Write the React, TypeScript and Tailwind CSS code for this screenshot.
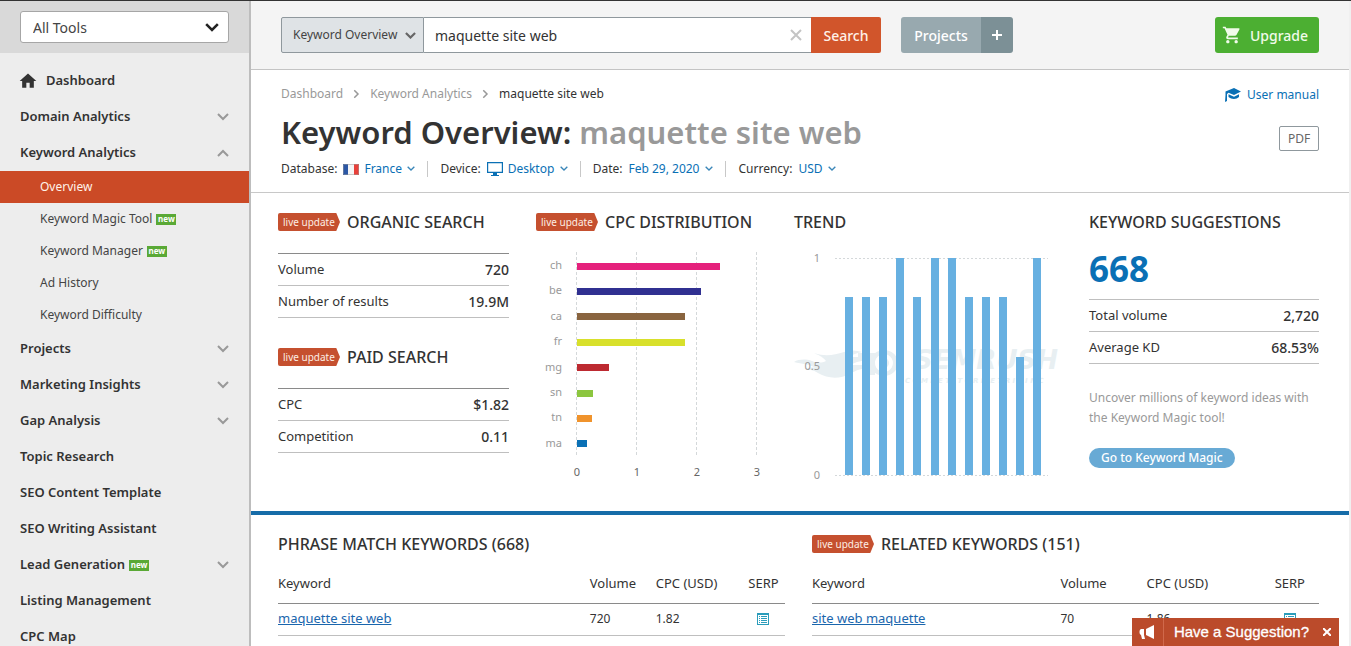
import { useState } from 'react'
import { MdHome, MdShoppingCart } from 'react-icons/md'

type NavItem = {
    label: string
    icon?: boolean
    isNew?: boolean
    expandable?: boolean
    children?: { label: string; isNew?: boolean; active?: boolean }[]
}

const navItems: NavItem[] = [
    { label: 'Dashboard', icon: true },
    { label: 'Domain Analytics', expandable: true },
    {
        label: 'Keyword Analytics',
        expandable: true,
        children: [
            { label: 'Overview', active: true },
            { label: 'Keyword Magic Tool', isNew: true },
            { label: 'Keyword Manager', isNew: true },
            { label: 'Ad History' },
            { label: 'Keyword Difficulty' },
        ],
    },
    { label: 'Projects', expandable: true },
    { label: 'Marketing Insights', expandable: true },
    { label: 'Gap Analysis', expandable: true },
    { label: 'Topic Research' },
    { label: 'SEO Content Template' },
    { label: 'SEO Writing Assistant' },
    { label: 'Lead Generation', expandable: true, isNew: true },
    { label: 'Listing Management' },
    { label: 'CPC Map' },
]

const cpcData = [
    { country: 'ch', value: 2.39, color: '#e5217c' },
    { country: 'be', value: 2.07, color: '#303091' },
    { country: 'ca', value: 1.8, color: '#89643f' },
    { country: 'fr', value: 1.8, color: '#d8e02b' },
    { country: 'mg', value: 0.54, color: '#bd2a31' },
    { country: 'sn', value: 0.27, color: '#8cc63f' },
    { country: 'tn', value: 0.25, color: '#f0932c' },
    { country: 'ma', value: 0.17, color: '#0a70b5' },
]

const trendData = [0.82, 0.82, 0.82, 1, 0.82, 1, 1, 0.82, 0.82, 0.82, 0.545, 1]

const Chevron = ({ className, up, stroke = 2 }: { className?: string; up?: boolean; stroke?: number }) => (
    <svg viewBox="0 0 12 8" className={className} fill="none" stroke="currentColor" strokeWidth={stroke} aria-hidden="true">
        <path d={up ? 'M1 7l5-5 5 5' : 'M1 1l5 5 5-5'} />
    </svg>
)

const NewBadge = () => (
    <span className="flex h-[11px] w-5 items-center justify-center bg-[#5aa936] text-[8px] leading-none font-bold text-white">new</span>
)

const LiveUpdate = () => (
    <span className="flex h-[18px] w-[62px] items-center rounded-l-xs bg-[#c5502f] pl-[5px] text-[10px] font-normal text-[#fdeee4] [clip-path:polygon(0_0,94%_0,100%_50%,94%_100%,0_100%)]">
        live update
    </span>
)

const SectionTitle = ({ children, live }: { children: string; live?: boolean }) => (
    <h2 className="flex h-6 items-center gap-[7px] text-[16px] font-medium whitespace-nowrap text-[#333]">
        {live && <LiveUpdate />}
        {children}
    </h2>
)

const Sidebar = () => {
    const [open, setOpen] = useState<Record<string, boolean>>({ 'Keyword Analytics': true })

    return (
        <aside className="w-[251px] shrink-0 border-r-2 border-[#bdbdbd] bg-[#ededed]">
            <div className="relative bg-[#d9d9d9] px-5 pt-[10px] pb-[10px]">
                <select aria-label="Tools" className="h-8 w-full max-w-[209px] appearance-none rounded-[3px] border border-[#a6a6a6] bg-white px-3 text-[14px] text-[#444]">
                    <option>All Tools</option>
                </select>
                <Chevron className="pointer-events-none absolute top-[22px] right-[30px] w-[14px] text-[#222]" stroke={2.2} />
            </div>
            <nav className="pt-[10px]">
                <ul>
                    {navItems.map((item) => (
                        <li key={item.label}>
                            {item.expandable ? (
                                <button
                                    type="button"
                                    aria-expanded={!!open[item.label]}
                                    onClick={() => setOpen({ ...open, [item.label]: !open[item.label] })}
                                    className="flex h-9 w-full items-center gap-1 px-5 text-[13px] font-semibold text-[#333]"
                                >
                                    {item.label}
                                    {item.isNew && <NewBadge />}
                                    <Chevron className="ml-auto w-3 text-[#999]" up={open[item.label]} />
                                </button>
                            ) : (
                                <a href="#" className="flex h-9 items-center px-5 text-[13px] font-semibold text-[#333]">
                                    {item.icon && <MdHome className="mr-2 -ml-[2px] h-5 w-5" />}
                                    {item.label}
                                </a>
                            )}
                            {item.children && open[item.label] && (
                                <ul>
                                    {item.children.map((child) => (
                                        <li key={child.label}>
                                            <a
                                                href="#"
                                                className={
                                                    child.active
                                                        ? 'flex h-8 items-center bg-[#cb4a26] pl-10 text-[12px] text-[#fff3ea]'
                                                        : 'flex h-8 items-center gap-1 pl-10 text-[12px] text-[#444]'
                                                }
                                            >
                                                {child.label}
                                                {child.isNew && <NewBadge />}
                                            </a>
                                        </li>
                                    ))}
                                </ul>
                            )}
                        </li>
                    ))}
                </ul>
            </nav>
        </aside>
    )
}

const Header = () => (
    <header className="flex items-center border-b border-[#c4c4c4] bg-[#f4f4f4] px-[30px] py-4">
        <form className="flex h-9 min-w-0 max-w-[600px] flex-1" onSubmit={(e) => e.preventDefault()}>
            <div className="relative">
                <select aria-label="Report" className="h-9 w-[143px] appearance-none rounded-l-xs border border-[#8f989d] bg-[#dfe3e6] pl-[11px] text-[12px] text-[#444]">
                    <option>Keyword Overview</option>
                </select>
                <Chevron className="pointer-events-none absolute top-[15px] right-2 w-[11px] text-[#666]" stroke={2.4} />
            </div>
            <div className="relative flex-1">
                <input
                    aria-label="Keyword"
                    defaultValue="maquette site web"
                    className="h-9 w-full border-y border-[#8f989d] bg-white pr-9 pl-[11px] text-[14px] text-[#333] outline-none"
                />
                <button type="button" aria-label="Clear" className="absolute top-3 right-[9px]">
                    <svg viewBox="0 0 12 12" className="w-3" stroke="#c4c4c4" strokeWidth="2" aria-hidden="true">
                        <path d="M1 1l10 10M11 1L1 11" />
                    </svg>
                </button>
            </div>
            <button type="submit" className="h-9 w-[70px] rounded-r-xs bg-[#d1552b] text-[14px] font-medium text-[#fff1e8]">
                Search
            </button>
        </form>
        <div className="ml-5 flex h-9 overflow-hidden rounded-[3px] text-white">
            <button type="button" className="w-20 bg-[#98a9af] text-[14px] font-medium">Projects</button>
            <button type="button" aria-label="Add project" className="flex w-8 items-center justify-center bg-[#7c9096]">
                <svg viewBox="0 0 10 10" className="w-[10px]" stroke="currentColor" strokeWidth="2" aria-hidden="true">
                    <path d="M5 0v10M0 5h10" />
                </svg>
            </button>
        </div>
        <button type="button" className="ml-auto flex h-9 w-[104px] items-center gap-2 rounded-[3px] bg-[#4caf32] pl-[7px] text-[14px] font-medium text-[#f1fbea]">
            <MdShoppingCart className="h-5 w-5" />
            Upgrade
        </button>
    </header>
)

const FranceFlag = () => (
    <svg viewBox="0 0 16 11" className="w-4" aria-hidden="true">
        <path fill="#2b57a5" d="M0 0h5v11H0z" />
        <path fill="#f4f4f4" d="M5 0h6v11H5z" />
        <path fill="#e8403a" d="M11 0h5v11h-5z" />
        <path fill="none" stroke="#999" strokeOpacity="0.5" d="M.5 .5h15v10H.5z" />
    </svg>
)

const Monitor = () => (
    <svg viewBox="0 0 16 14" className="w-4" aria-hidden="true" fill="#0a70b5">
        <path fillRule="evenodd" d="M0 0h16v11H0zM1.2 1.2v8.6h13.6V1.2z" />
        <path d="M6 11h4v2h2v1H4v-1h2z" />
    </svg>
)

const GradCap = () => (
    <svg viewBox="0 0 16 14" className="w-4" aria-hidden="true" fill="#0a70b5">
        <path d="M9 0l7 3.500-7 3.500-5.500-2.200L2 6v7L0 14l.5-7V3.500z" />
        <path d="M3.500 6.300L9 8.700l5-2.500V9c-2.500 2.600-7.500 2.700-10.500 0z" />
    </svg>
)

const params = [
    { id: 'database', label: 'Database:', value: 'France', icon: <FranceFlag /> },
    { id: 'device', label: 'Device:', value: 'Desktop', icon: <Monitor /> },
    { id: 'date', label: 'Date:', value: 'Feb 29, 2020' },
    { id: 'currency', label: 'Currency:', value: 'USD' },
]

const PageTitle = () => (
    <section className="flex justify-between border-b border-[#c8c8c8] px-[30px] pt-[14px] pb-[13px]">
        <div>
            <nav aria-label="Breadcrumb" className="flex h-5 items-center gap-[9px] text-[12px] text-[#999]">
                <a href="#">Dashboard</a>
                <Chevron className="w-[9px] -rotate-90" />
                <a href="#">Keyword Analytics</a>
                <Chevron className="w-[9px] -rotate-90" />
                <span className="text-[#333]">maquette site web</span>
            </nav>
            <h1 className="mt-[7px] text-[31px] leading-[42px] font-semibold text-[#333]">
                Keyword Overview: <span className="text-[#999]">maquette site web</span>
            </h1>
            <div className="mt-[6px] flex h-5 items-center text-[12px]">
                {params.map((param) => (
                    <div key={param.id} className="flex h-4 items-center gap-[5px] border-l border-[#c8c8c8] px-3 first:border-l-0 first:pl-0">
                        <label htmlFor={param.id} className="mr-px text-[#333]">{param.label}</label>
                        {param.icon}
                        <div className="relative flex items-center">
                            <select id={param.id} className="appearance-none pr-[13px] text-[#0a70b5]">
                                <option>{param.value}</option>
                            </select>
                            <Chevron className="pointer-events-none absolute right-0 w-2 text-[#3a86b8]" />
                        </div>
                    </div>
                ))}
            </div>
        </div>
        <div className="flex flex-col items-end gap-5">
            <a href="#" className="flex h-[22px] items-center gap-[6px] text-[12px] text-[#0a70b5]">
                <GradCap />
                User manual
            </a>
            <button type="button" className="h-[25px] w-10 rounded-xs border border-[#8f989d] text-[12px] text-[#666]">PDF</button>
        </div>
    </section>
)

const Stats = ({ rows, light }: { rows: [string, string][]; light?: boolean }) => (
    <table className={light ? 'w-full border-t border-[#bfbfbf] text-[#333]' : 'w-full border-t border-[#8a8a8a] text-[#333]'}>
        <tbody>
            {rows.map(([name, value]) => (
                <tr key={name} className="h-8 border-b border-[#bfbfbf]">
                    <th scope="row" className="text-left text-[13px] font-normal">{name}</th>
                    <td className="text-right text-[14px] font-medium">{value}</td>
                </tr>
            ))}
        </tbody>
    </table>
)

const CpcChart = () => (
    <svg viewBox="0 0 231 234" className="mt-[14px] w-[231px]" role="img" aria-label="CPC distribution by country">
        {[0, 1, 2, 3].map((tick) => (
            <g key={tick}>
                <path d={`M${40.5 + tick * 60} 4v204`} stroke="#d4d8da" strokeDasharray="3 2" />
                <text x={41 + tick * 60} y="228" textAnchor="middle" fontSize="11" fill="#666">{tick}</text>
            </g>
        ))}
        {cpcData.map((row, i) => (
            <g key={row.country}>
                <text x="26" y={21 + i * 25.4} textAnchor="end" fontSize="11" fill="#999">{row.country}</text>
                <rect x="41" y={Math.round(14.5 + i * 25.4)} width={Math.round(row.value * 60)} height="7" fill={row.color} />
            </g>
        ))}
    </svg>
)

const TrendChart = () => (
    <svg viewBox="0 0 268 234" className="mt-[14px] w-[268px]" role="img" aria-label="Search volume trend">
        <g fill="#e8eff2">
            <path d="M0 114c5-3 12-3 18-1 5 2 10 2 14 0-4-5-8-6-12-8 12 4 20 2 30-1 6-2 12-2 18 0-6 1-10 3-14 5h24v3c-10 0-16 2-22 5h24v3c-12 0-18 2-24 6-10 5-22 5-32-1-5-3-9-4-14-4 4-1 8-2 12-1-7-4-14-4-22-6z" />
            <path d="M64 105h17v22h-9v-16h-8z" />
            <path fillRule="evenodd" d="M90 102a14 13 0 1 0 .1 0zm0 4a9 9 0 1 1-.1 0z" />
            <circle cx="90" cy="115" r="5" />
            <text x="120" y="121" fontSize="26" fontWeight="700" fontStyle="italic" fontFamily="DejaVu Sans, sans-serif">SEMRUSH</text>
            <text x="111" y="135" fontSize="7" fontWeight="700" fontStyle="italic" fontFamily="DejaVu Sans, sans-serif">C O M P E T I T O R  M E T R I C  I N C</text>
        </g>
        <path d="M41 10.5h213M41 227.5h213" stroke="#d4d8da" strokeDasharray="2 2" />
        {trendData.map((value, i) => (
            <rect key={i} x={Math.round(51 + i * 17.1)} y={Math.round(227 - value * 217)} width="8" height={Math.round(value * 217)} fill="#67b0e1" />
        ))}
        <g fontSize="11" fill="#999" textAnchor="end">
            <text x="26" y="14">1</text>
            <text x="26" y="122">0.5</text>
            <text x="26" y="231">0</text>
        </g>
    </svg>
)

const Overview = () => (
    <section className="grid grid-cols-[231fr_231fr_268fr_230fr] gap-[27px] border-b-4 border-[#166ca8] pt-[17px] pr-[30px] pb-[29px] pl-[27px]">
        <div>
            <SectionTitle live>ORGANIC SEARCH</SectionTitle>
            <div className="mt-[19px] mb-[27px]">
                <Stats rows={[['Volume', '720'], ['Number of results', '19.9M']]} />
            </div>
            <SectionTitle live>PAID SEARCH</SectionTitle>
            <div className="mt-[19px]">
                <Stats rows={[['CPC', '$1.82'], ['Competition', '0.11']]} />
            </div>
        </div>
        <div>
            <SectionTitle live>CPC DISTRIBUTION</SectionTitle>
            <CpcChart />
        </div>
        <div>
            <SectionTitle>TREND</SectionTitle>
            <TrendChart />
        </div>
        <div>
            <SectionTitle>KEYWORD SUGGESTIONS</SectionTitle>
            <p className="mt-[15px] mb-[10px] text-[35px] leading-10 font-bold text-[#0a70b5]">668</p>
            <Stats light rows={[['Total volume', '2,720'], ['Average KD', '68.53%']]} />
            <p className="mt-6 text-[12px] leading-5 text-[#999]">
                Uncover millions of keyword ideas with the Keyword Magic tool!
            </p>
            <a href="#" className="mt-5 inline-flex h-5 items-center rounded-full bg-[#68aad5] px-3 text-[12px] font-medium text-white">
                Go to Keyword Magic
            </a>
        </div>
    </section>
)

const SerpIcon = () => (
    <svg viewBox="0 0 12 12" className="mx-auto w-3" aria-hidden="true">
        <path fill="#2b9dbb" fillRule="evenodd" d="M0 0h12v12H0zM1 2v9h10V2z" />
        <path stroke="#2b9dbb" d="M2 3.5h1M4 3.5h6M2 5.5h1M4 5.5h6M2 7.5h1M4 7.5h6M2 9.5h1M4 9.5h6" />
    </svg>
)

type KeywordTableProps = { title: string; live?: boolean; widths: string[]; row: [string, string, string] }

const KeywordTable = ({ title, live, widths, row }: KeywordTableProps) => (
    <div>
        <SectionTitle live={live}>{title}</SectionTitle>
        <table className="mt-[9px] w-full table-fixed text-left text-[#333]">
            <thead>
                <tr className="h-[38px] border-b border-[#8a8a8a] text-[13px]">
                    <th scope="col" className={`${widths[0]} font-normal`}>Keyword</th>
                    <th scope="col" className={`${widths[1]} font-normal`}>Volume</th>
                    <th scope="col" className={`${widths[2]} font-normal`}>CPC (USD)</th>
                    <th scope="col" className={`${widths[3]} text-center font-normal`}>SERP</th>
                </tr>
            </thead>
            <tbody>
                <tr className="h-8 border-b border-[#bfbfbf] text-[12px]">
                    <td>
                        <a href="#" className="text-[13px] text-[#1a66ad] underline">{row[0]}</a>
                    </td>
                    <td>{row[1]}</td>
                    <td>{row[2]}</td>
                    <td>
                        <a href="#" aria-label="View SERP" className="block">
                            <SerpIcon />
                        </a>
                    </td>
                </tr>
            </tbody>
        </table>
    </div>
)

const Suggestion = () => (
    <div className="fixed right-3 bottom-0 flex h-7 items-center bg-[#bb4b2b] text-white">
        <span className="flex h-full w-8 items-center justify-center border-r border-[#d0694b]">
            <svg viewBox="0 0 16 14" className="w-4" fill="currentColor" aria-hidden="true">
                <path d="M15 0v14l-8-4V4zM5 4v6l1 4H3L2 10C0 9.500 0 4.500 2 4z" />
            </svg>
        </span>
        <button type="button" className="pl-[10px] font-['Liberation_Sans',sans-serif] text-[15px] [-webkit-text-stroke:0.3px_white]">
            Have a Suggestion?
        </button>
        <button type="button" aria-label="Close" className="pr-2 pl-[14px]">
            <svg viewBox="0 0 8 8" className="w-2" stroke="currentColor" strokeWidth="2" aria-hidden="true">
                <path d="M0 0l8 8M8 0L0 8" />
            </svg>
        </button>
    </div>
)

const App = () => {
    return (
        <div className="flex h-screen overflow-hidden border-t border-[#333] bg-white font-['Noto_Sans',sans-serif]">
            <Sidebar />
            <main className="min-w-0 flex-1 border-r-2 border-[#f0f0f0]">
                <Header />
                <PageTitle />
                <Overview />
                <section className="grid grid-cols-2 gap-[27px] pt-[17px] pr-[30px] pl-[27px]">
                    <KeywordTable
                        title="PHRASE MATCH KEYWORDS (668)"
                        widths={['w-[61.5%]', 'w-[13%]', 'w-[17%]', 'w-[8.5%]']}
                        row={['maquette site web', '720', '1.82']}
                    />
                    <KeywordTable
                        live
                        title="RELATED KEYWORDS (151)"
                        widths={['w-[49%]', 'w-[17%]', 'w-[22.5%]', 'w-[11.5%]']}
                        row={['site web maquette', '70', '1.86']}
                    />
                </section>
            </main>
            <Suggestion />
        </div>
    )
}

export default App
